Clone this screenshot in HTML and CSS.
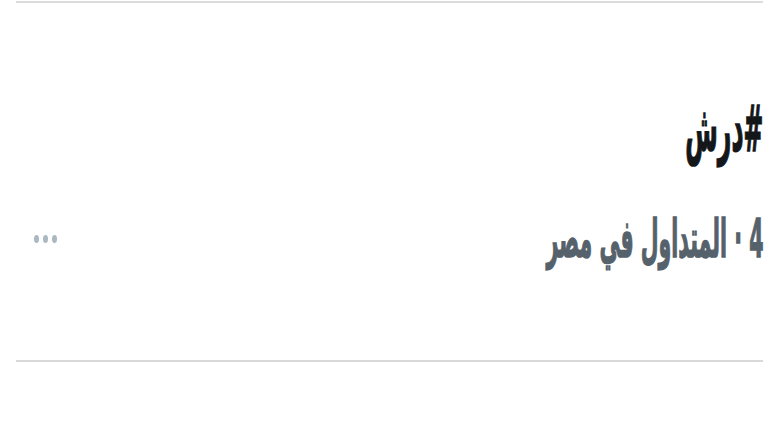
FILE: index.html
```html
<!DOCTYPE html>
<html lang="ar" dir="rtl">
<head>
<meta charset="utf-8">
<link rel="stylesheet" href="styles.css">
</head>
<body>
<div class="list">
  <div class="trend">
    <div class="text">
      <div class="tag">#درش</div>
      <div class="meta">4 · المتداول في مصر</div>
    </div>
    <div class="more" aria-label="more">
      <span class="dot"></span><span class="dot"></span><span class="dot"></span>
    </div>
  </div>
</div>
</body>
</html>
```

FILE: styles.css
```css
html, body {
  margin: 0;
  padding: 0;
  background: #ffffff;
}
body {
  font-family: "DejaVu Sans", sans-serif;
  width: 779px;
  height: 439px;
  overflow: hidden;
}
.list {
  padding: 1px 16px 0;
}
.trend {
  border-top: 2px solid #dcdcdc;
  border-bottom: 2px solid #d9d9d9;
  height: 357px;
  display: flex;
  flex-direction: row;
  justify-content: space-between;
  align-items: flex-start;
}
.text {
  padding-top: 96px;
  display: flex;
  flex-direction: column;
  align-items: flex-start;
  gap: 55px;
}
.tag {
  font-size: 40px;
  font-weight: bold;
  color: #14171a;
  line-height: 60px;
  -webkit-text-stroke: 1px #14171a;
  transform: scale(0.59, 1.6);
  transform-origin: right center;
}
.meta {
  font-size: 36px;
  font-weight: bold;
  color: #55616b;
  line-height: 50px;
  -webkit-text-stroke: 1px #55616b;
  transform: scale(0.57, 1.46);
  transform-origin: right center;
}
.more {
  display: flex;
  gap: 4px;
  margin-top: 232px;
  margin-left: 18px;
}
.dot {
  width: 5px;
  height: 8px;
  border-radius: 50%;
  background: #aab8c2;
}
```
